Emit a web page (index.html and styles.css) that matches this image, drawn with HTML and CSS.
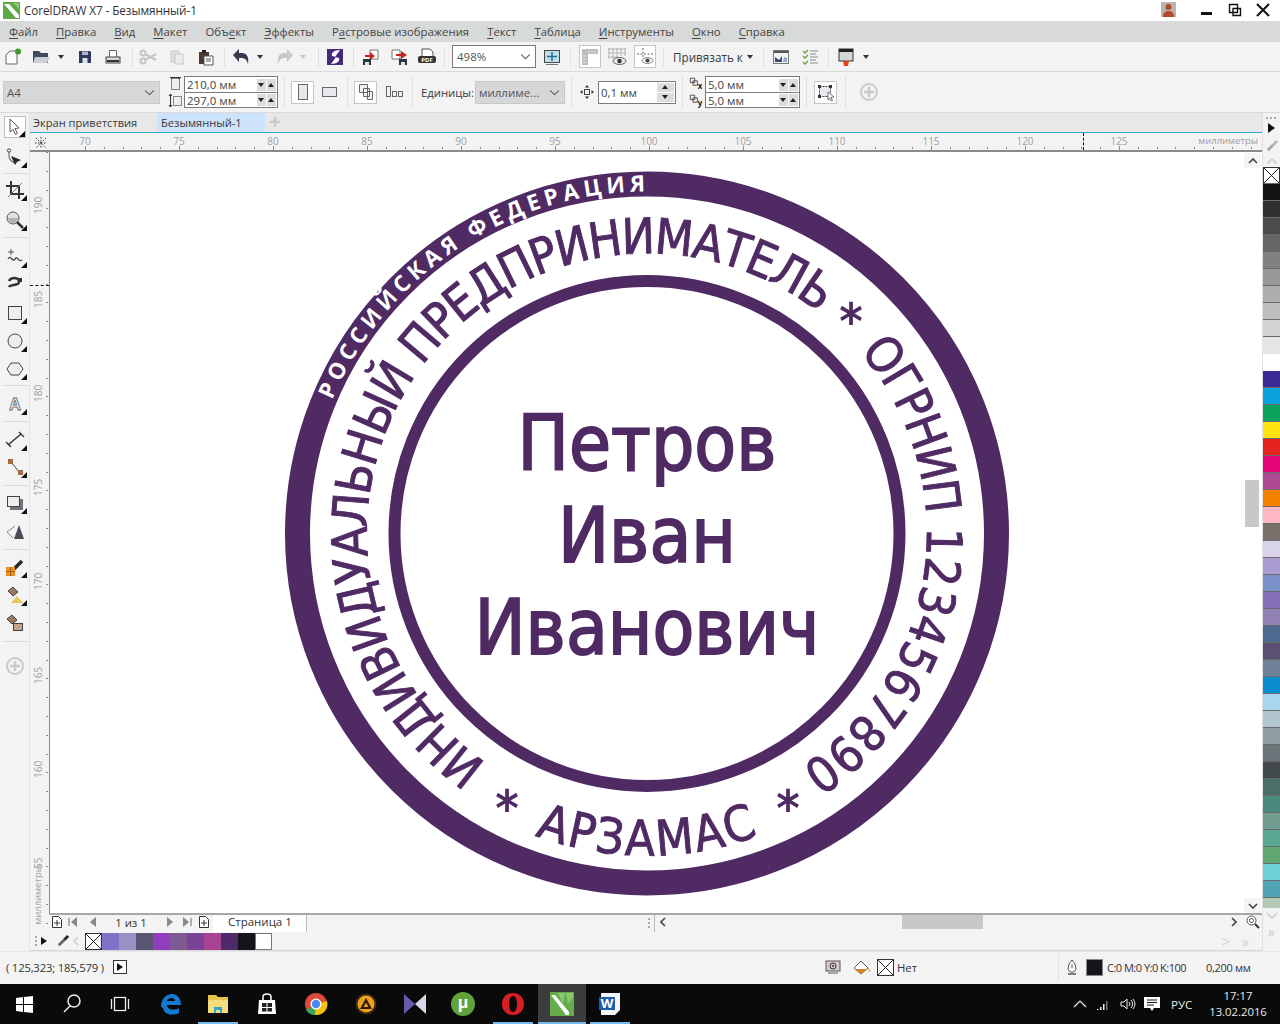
FILE: index.html
```html
<!DOCTYPE html>
<html lang="ru">
<head>
<meta charset="utf-8">
<title>CorelDRAW X7 - Безымянный-1</title>
<link rel="stylesheet" href="styles.css">
</head>
<body>
<div class="app">
  <header class="title">
    <svg class="logo" viewBox="0 0 17 17"><rect width="17" height="17" fill="#5fa845"/><path d="M1 2h5l10 11v3h-3z" fill="#fff"/><path d="M10 1h6v6z" fill="#8cc872"/></svg>
    <span class="title-text">CorelDRAW X7 - Безымянный-1</span>
    <svg class="user" viewBox="0 0 15 15"><rect width="15" height="15" fill="#b9b4b0"/><circle cx="7.5" cy="5" r="3" fill="#b5482a"/><path d="M2 15c0-5 3-6 5.500-6s5.500 1 5.500 6z" fill="#b5482a"/></svg>
    <svg class="winbtn" viewBox="0 0 28 18"><rect x="8" y="11" width="11" height="3" fill="#111"/></svg>
    <svg class="winbtn" viewBox="0 0 28 18"><path d="M8.500 3.500h8v8h-8zM12 7.500h7.500v7H12z" fill="#fff" stroke="#111" stroke-width="1.400"/></svg>
    <svg class="winbtn" viewBox="0 0 28 18"><path d="M8 3l12 12M20 3L8 15" stroke="#111" stroke-width="2"/></svg>
  </header>

  <nav class="menu">
    <span><u>Ф</u>айл</span><span><u>П</u>равка</span><span><u>В</u>ид</span><span><u>М</u>акет</span><span>Объ<u>е</u>кт</span><span><u>Э</u>ффекты</span><span>Р<u>а</u>стровые изображения</span><span><u>Т</u>екст</span><span><u>Т</u>аблица</span><span><u>И</u>нструменты</span><span><u>О</u>кно</span><span><u>С</u>правка</span>
  </nav>

  <div class="bar1">
    <svg class="ic ml3" viewBox="0 0 20 20"><path d="M3 17V8l4-4h7v13z" fill="#fafafa" stroke="#666"/><circle cx="15" cy="4.500" r="3" fill="#3f9a2c"/></svg>
    <svg class="ic ml8" viewBox="0 0 20 20"><path d="M2 4h6l2 2h7v10H2z" fill="#3d4a5e"/><path d="M2 16l2-6h15l-3 6z" fill="#c9ced6"/></svg>
    <i class="dd ml6"></i>
    <svg class="ic ml10" viewBox="0 0 20 20"><path d="M4 4h11l1 1v11H4z" fill="#2f3a5c"/><rect x="7" y="4.500" width="6" height="3.500" fill="#aeb6c8"/><rect x="7.500" y="11" width="5" height="5" fill="#dfe3ea"/></svg>
    <svg class="ic ml8" viewBox="0 0 20 20"><path d="M6.500 3.500h7v7h-7z" fill="#fff" stroke="#666"/><rect x="3" y="10" width="14" height="6" fill="#d6d8dc" stroke="#444"/><rect x="4" y="13" width="12" height="2" fill="#333"/></svg>
    <i class="sep ml9"></i>
    <svg class="ic ml5" viewBox="0 0 20 20"><g fill="none" stroke="#c6c6c8" stroke-width="2"><circle cx="5" cy="6" r="2.500"/><circle cx="5" cy="14" r="2.500"/><path d="M7 7l11 6M7 13l11-6"/></g></svg>
    <svg class="ic ml9" viewBox="0 0 20 20"><path d="M4 4h8v11H4z" fill="#e0e0e2" stroke="#ccc"/><path d="M8 7h8v10H8z" fill="#ececee" stroke="#c6c6c8"/></svg>
    <svg class="ic ml8" viewBox="0 0 20 20"><path d="M4 5h10v12H4z" fill="#4b3a32"/><rect x="7" y="3" width="4" height="3" fill="#222"/><path d="M9 9h9v9H9z" fill="#fff" stroke="#555"/><path d="M11 12h5M11 14h5" stroke="#555"/></svg>
    <i class="sep ml9"></i>
    <svg class="ic ml6" viewBox="0 0 20 20"><path d="M2 8l6-6v4h3c5 0 7 4 6 11-1-4-3-6-6-6H8v4z" fill="#333b4a"/></svg>
    <i class="dd ml5"></i>
    <svg class="ic ml11" viewBox="0 0 20 20"><path d="M18 8l-6-6v4H9C4 6 2 10 3 17c1-4 3-6 6-6h3v4z" fill="#c8c9cc"/></svg>
    <i class="dd dd-off ml4"></i>
    <i class="sep ml11"></i>
    <svg class="ic ml6" viewBox="0 0 20 20"><rect x="2" y="2" width="16" height="16" fill="#47287c"/><path d="M15 3C9 3 6 6 7 9l4 1-5 7c6 0 9-3 8-6l-4-1z" fill="#fff"/></svg>
    <i class="sep ml8"></i>
    <svg class="ic ml7" viewBox="0 0 20 20"><path d="M9 3h8v9H9z" fill="#fff" stroke="#777"/><path d="M4 8h5V5l5 4-5 4v-3H4z" fill="#c52222"/><rect x="2" y="12" width="8" height="6" fill="#2d3340"/><rect x="4" y="15" width="4" height="3" fill="#dfe3ea"/></svg>
    <svg class="ic ml8" viewBox="0 0 20 20"><path d="M3 3h8v9H3z" fill="#fff" stroke="#777"/><path d="M7 7h5V4l6 4-6 4V9H7z" fill="#c52222"/><rect x="10" y="12" width="8" height="6" fill="#2d3340"/><rect x="12" y="15" width="4" height="3" fill="#dfe3ea"/></svg>
    <svg class="ic ml8" viewBox="0 0 20 20"><path d="M5 2h8l3 3v5H5z" fill="#fff" stroke="#555"/><rect x="1" y="9" width="18" height="7" rx="2" fill="#333"/><text x="10" y="15" class="pdf">PDF</text></svg>
    <i class="sep ml7"></i>
    <div class="combo ml7"><span>498%</span><svg class="chev" viewBox="0 0 10 6"><path d="M1 1l4 4 4-4" fill="none" stroke="#666"/></svg></div>
    <svg class="ic ml6" viewBox="0 0 20 20"><rect x="2.500" y="3.500" width="15" height="12" fill="#bfdfe8" stroke="#444"/><path d="M10 5v9M5 9.500h10" stroke="#1f6f90" stroke-width="1.500"/><path d="M4 17.500h12" stroke="#777"/></svg>
    <i class="sep ml8"></i>
    <div class="box ml8"><svg class="ic" viewBox="0 0 20 20"><path d="M2 2h16v5H8v11H2z" fill="#bbbcbe"/><path d="M9 4v2M12 4v2M15 4v2M3 9h3M3 12h3M3 15h3" stroke="#eee"/></svg></div>
    <svg class="ic ml6" viewBox="0 0 20 20"><path d="M2 1v11M6 1v11M10 1v9M14 1v8M18 1v8M1 2h18M1 6h18M1 10h10" stroke="#b4b4b6"/><ellipse cx="12.500" cy="14" rx="6.500" ry="3.500" fill="#e8e8e8" stroke="#666"/><circle cx="12.500" cy="14" r="2.200" fill="#333"/></svg>
    <div class="box ml7"><svg class="ic" viewBox="0 0 20 20"><path d="M2 7h16M8 1v10" stroke="#666" stroke-dasharray="2 1.500"/><ellipse cx="12.500" cy="13.500" rx="5.500" ry="3" fill="#eee" stroke="#888"/><circle cx="12.500" cy="13.500" r="2" fill="#444"/></svg></div>
    <i class="sep ml7"></i>
    <span class="snap ml9">Привязать к</span>
    <i class="dd ml1"></i>
    <i class="sep ml9"></i>
    <svg class="ic ml7" viewBox="0 0 20 20"><rect x="2.500" y="3.500" width="15" height="13" fill="#f4f4f4" stroke="#777"/><rect x="3" y="4" width="14" height="2" fill="#555"/><path d="M4 15v-5l4 3 3-4v6z" fill="#394a78"/><path d="M12 15l1-5 3 1v4z" fill="#9aa7c4"/></svg>
    <svg class="ic ml9" viewBox="0 0 20 20"><path d="M3 4l2 2 3-3M3 9l2 2 3-3M3 15l2 2 3-3" fill="none" stroke="#6ba23f" stroke-width="1.300"/><path d="M10 4h8M10 7h6M10 10h8M10 13h6M10 16h8" stroke="#8b8b8d"/></svg>
    <i class="sep ml8"></i>
    <svg class="ic ml7" viewBox="0 0 20 20"><rect x="3" y="2" width="14" height="12" fill="#d4d6da" stroke="#333"/><rect x="3" y="2" width="14" height="3" fill="#222"/><path d="M7 14h6l-1 5H8z" fill="#e8421a"/></svg>
    <i class="dd ml6"></i>
  </div>

  <div class="bar2">
    <div class="select sel-a4"><span>A4</span><svg class="chev" viewBox="0 0 10 6"><path d="M1 1l4 4 4-4" fill="none" stroke="#666"/></svg></div>
    <div class="dual ml8">
      <svg class="mini" viewBox="0 0 15 15"><rect x="3.500" y="2.500" width="8" height="11" fill="#eee" stroke="#888"/><path d="M2 1.500h11" stroke="#333"/><path d="M4 1v2M11 1v2" stroke="#333"/></svg>
      <svg class="mini" viewBox="0 0 15 15"><rect x="5.500" y="3.500" width="8" height="9" fill="#eee" stroke="#888"/><path d="M2.500 1v13M1 3l1.500-2L4 3M1 12l1.500 2L4 12" fill="none" stroke="#333"/></svg>
    </div>
    <div class="pair ml1 w94">
      <div class="pair-row"><span>210,0 мм</span><b class="sp dn"></b><b class="sp up"></b></div>
      <div class="pair-row"><span>297,0 мм</span><b class="sp dn"></b><b class="sp up"></b></div>
    </div>
    <i class="sep sep-tall ml6"></i>
    <div class="box box-lg ml6"><svg class="ic" viewBox="0 0 20 20"><rect x="5.500" y="2.500" width="9" height="15" fill="#e6e8ee" stroke="#666"/></svg></div>
    <svg class="ic ml5" viewBox="0 0 20 20"><rect x="3.500" y="5.500" width="14" height="9" fill="#e6e8ee" stroke="#666"/></svg>
    <i class="sep sep-tall ml8"></i>
    <div class="box box-lg ml6"><svg class="ic" viewBox="0 0 20 20"><path d="M3.500 2.500h8v8h-8zM7.500 6.500h6v8h-6zM11.500 9.500h5v8h-5z" fill="#f2f2f2" stroke="#666"/></svg></div>
    <svg class="ic ml7" viewBox="0 0 20 20"><rect x="2.500" y="4.500" width="4" height="10" fill="#f2f2f2" stroke="#666"/><rect x="8.500" y="9.500" width="4" height="5" fill="#f2f2f2" stroke="#666"/><rect x="14.500" y="9.500" width="4" height="5" fill="#f2f2f2" stroke="#666"/></svg>
    <i class="sep sep-tall ml8"></i>
    <span class="units ml8">Единицы:</span>
    <div class="select sel-unit ml2"><span>миллиме...</span><svg class="chev" viewBox="0 0 10 6"><path d="M1 1l4 4 4-4" fill="none" stroke="#666"/></svg></div>
    <i class="sep sep-tall ml6"></i>
    <svg class="ic ml5" viewBox="0 0 20 20"><path d="M10 3l2 2.500H8zM10 17l2-2.500H8zM3 10l2.500-2v4zM17 10l-2.500-2v4z" fill="#333"/><rect x="7.500" y="7.500" width="5" height="5" fill="#eee" stroke="#444"/></svg>
    <div class="nudge ml1"><span>0,1 мм</span><div class="nudge-sp"><b class="sp up"></b><b class="sp dn"></b></div></div>
    <i class="sep sep-tall ml6"></i>
    <div class="dual ml6">
      <svg class="mini" viewBox="0 0 17 15"><path d="M1.500 1.500h5v5h-5zM4.500 4.500h5v5h-5z" fill="#f2f2f2" stroke="#444"/><text x="10" y="14" class="xy">x</text></svg>
      <svg class="mini" viewBox="0 0 17 15"><path d="M1.500 1.500h5v5h-5zM4.500 4.500h5v5h-5z" fill="#f2f2f2" stroke="#444"/><text x="10" y="14" class="xy">y</text></svg>
    </div>
    <div class="pair ml1 w95">
      <div class="pair-row"><span>5,0 мм</span><b class="sp dn"></b><b class="sp up"></b></div>
      <div class="pair-row"><span>5,0 мм</span><b class="sp dn"></b><b class="sp up"></b></div>
    </div>
    <i class="sep sep-tall ml6"></i>
    <div class="box box-lg ml7"><svg class="ic" viewBox="0 0 20 20"><path d="M3.500 4.500h11v10h-11z" fill="#e6e8ee" stroke="#444" stroke-dasharray="2 1"/><path d="M2 3h3v3H2zM13 3h3v3h-3zM2 13h3v3H2zM13 13h3v3h-3z" fill="#333"/><path d="M12 10l6 5-3 .500 1.500 3-1.500.500-1.500-3-1.500 2z" fill="#fff" stroke="#444" stroke-width=".7"/></svg></div>
    <i class="sep sep-tall ml8"></i>
    <svg class="ic ml13" viewBox="0 0 20 20"><circle cx="10" cy="10" r="8" fill="none" stroke="#c9c9cb" stroke-width="2"/><path d="M10 5v10M5 10h10" stroke="#c9c9cb" stroke-width="2.500"/></svg>
  </div>

  <div class="main">
    <aside class="toolbox">
      <div class="tool-box fly"><svg class="ic" viewBox="0 0 20 20"><path d="M5 2l9 9-4 .500 2.500 5-2 1-2.500-5L5 15z" fill="#fff" stroke="#555"/></svg></div>
      <div class="tool fly mt9"><svg class="ic" viewBox="0 0 20 20"><path d="M4 3v6c0 3 2 5 5 7" fill="none" stroke="#777" stroke-width="1.300"/><path d="M6 9l10 4-4 2-2 3z" fill="#1d2b33"/><circle cx="4" cy="3.500" r="1.600" fill="#fff" stroke="#444"/></svg></div>
      <i class="hsep mt6"></i>
      <div class="tool fly mt6"><svg class="ic" viewBox="0 0 20 20"><path d="M6 1v13h13M1 6h13v13" fill="none" stroke="#333" stroke-width="2"/><path d="M3 17L17 3" stroke="#777"/></svg></div>
      <div class="tool fly mt10"><svg class="ic" viewBox="0 0 20 20"><circle cx="8" cy="8" r="6" fill="#e0e0e2" stroke="#555"/><path d="M3 8a5 5 0 0 0 10 0z" fill="#b0b2b6"/><path d="M12 12l6 6" stroke="#333" stroke-width="2.500"/></svg></div>
      <i class="hsep mt7"></i>
      <div class="tool fly mt9"><svg class="ic" viewBox="0 0 20 20"><path d="M6 2v6M3 5h6" stroke="#555"/><path d="M3 12c3-5 4 4 7 0s3 4 7 1" fill="none" stroke="#444" stroke-width="1.300"/></svg></div>
      <div class="tool mt6"><svg class="ic" viewBox="0 0 20 20"><path d="M4 8c2-4 9-4 10 0 1 5-9 3-10 6" fill="none" stroke="#333" stroke-width="2.500"/><rect x="13" y="5" width="4" height="4" fill="#333"/></svg></div>
      <div class="tool fly mt10"><svg class="ic" viewBox="0 0 20 20"><rect x="3.500" y="3.500" width="13" height="13" fill="#eceef2" stroke="#444"/></svg></div>
      <div class="tool fly mt8"><svg class="ic" viewBox="0 0 20 20"><circle cx="10" cy="10" r="7" fill="#eceef2" stroke="#444"/></svg></div>
      <div class="tool fly mt8"><svg class="ic" viewBox="0 0 20 20"><path d="M6 4h8l4 6-4 6H6l-4-6z" fill="#eceef2" stroke="#444"/></svg></div>
      <i class="hsep mt6"></i>
      <div class="tool fly mt8"><svg class="ic" viewBox="0 0 20 20"><text x="10" y="16" class="tool-a">A</text></svg></div>
      <i class="hsep mt7"></i>
      <div class="tool fly mt8"><svg class="ic" viewBox="0 0 20 20"><path d="M3 15L16 4" stroke="#333" stroke-width="1.500"/><path d="M1 12l5 5M14 2l5 5" stroke="#333" stroke-width="1.300"/></svg></div>
      <div class="tool fly mt7"><svg class="ic" viewBox="0 0 20 20"><path d="M6 5l9 11" stroke="#444"/><rect x="3" y="2" width="5" height="5" fill="#a36a44"/><rect x="13" y="13" width="5" height="5" fill="#a36a44"/></svg></div>
      <i class="hsep mt8"></i>
      <div class="tool fly mt7"><svg class="ic" viewBox="0 0 20 20"><rect x="5" y="6" width="13" height="11" fill="#71737a"/><rect x="2.500" y="3.500" width="12" height="10" fill="#eceef2" stroke="#444"/></svg></div>
      <div class="tool mt8"><svg class="ic" viewBox="0 0 20 20"><path d="M9 18l5-14 5 14z" fill="#4a4c54"/><path d="M2 11l8-6M2 11l6 6" stroke="#888" fill="none"/></svg></div>
      <i class="hsep mt8"></i>
      <div class="tool fly mt7"><svg class="ic" viewBox="0 0 20 20"><path d="M9 12L17 4" stroke="#2a2a2c" stroke-width="3.500"/><rect x="1" y="10" width="9" height="9" fill="#ea9323"/><path d="M5.500 10v9M1 14.500h9" stroke="#a85e10"/></svg></div>
      <div class="tool fly mt8"><svg class="ic" viewBox="0 0 20 20"><path d="M3 6l5-4 5 5-5 4z" fill="#9a7a5c" stroke="#444"/><path d="M6 18l6-7 6 7z" fill="#e8c75a"/></svg></div>
      <div class="tool mt8"><svg class="ic" viewBox="0 0 20 20"><path d="M2 6l5-4 5 5-5 4z" fill="#9a7a5c" stroke="#444"/><rect x="8.500" y="10.500" width="9" height="7" fill="#c0a58a" stroke="#444"/></svg></div>
      <i class="hsep mt8"></i>
      <div class="tool mt14"><svg class="ic" viewBox="0 0 20 20"><circle cx="10" cy="10" r="8" fill="none" stroke="#c9c9cb" stroke-width="2"/><path d="M10 5v10M5 10h10" stroke="#c9c9cb" stroke-width="2.500"/></svg></div>
    </aside>

    <section class="work">
      <div class="tabs">
        <span class="tab tab-a">Экран приветствия</span>
        <span class="tab tab-b">Безымянный-1</span>
        <span class="tab-plus">+</span>
      </div>
      <div class="hruler">
        <svg class="corner" viewBox="0 0 12 12"><path d="M6 0v12M0 6h12M1 1l10 10M11 1L1 11" stroke="#333" stroke-dasharray="1.500 1.500" fill="none"/></svg>
        <span class="rx">70</span><span class="rx">75</span><span class="rx">80</span><span class="rx">85</span><span class="rx">90</span><span class="rx">95</span><span class="rx">100</span><span class="rx">105</span><span class="rx">110</span><span class="rx">115</span><span class="rx">120</span><span class="rx">125</span>
        <span class="unit-h">миллиметры</span>
        <i class="mark-h"></i>
      </div>
      <div class="body">
        <div class="vruler">
          <span class="ry">190</span><span class="ry">185</span><span class="ry">180</span><span class="ry">175</span><span class="ry">170</span><span class="ry">165</span><span class="ry">160</span><span class="ry ry-last">55</span>
          <span class="unit-v">миллиметры</span>
          <i class="mark-v"></i>
        </div>
        <div class="view">
          <div class="canvas">
            <svg class="stamp" viewBox="50 152 1211 761">
              <defs>
                <path id="arcTop" d="M332.200 399.900A342 342 0 0 1 764 212.100"/>
                <path id="arcMain" d="M486.400 762.900A280 280 0 1 1 695.600 809.200"/>
                <path id="arcBottom" d="M510.900 825.300A322 322 0 0 0 783.100 825.300"/>
              </defs>
              <circle cx="647" cy="533.500" r="349.500" class="ring ring-a"/>
              <circle cx="647" cy="533.500" r="252.500" class="ring ring-b"/>
              <text class="st-top"><textPath href="#arcTop" textLength="398" lengthAdjust="spacing">РОССИЙСКАЯ ФЕДЕРАЦИЯ</textPath></text>
              <text class="st-arc"><textPath href="#arcMain" textLength="894" lengthAdjust="spacing">ИНДИВИДУАЛЬНЫЙ ПРЕДПРИНИМАТЕЛЬ</textPath></text>
              <text class="st-arc"><textPath href="#arcMain" startOffset="950" textLength="179" lengthAdjust="spacing">ОГРНИП</textPath></text>
              <text class="st-arc"><textPath href="#arcMain" startOffset="1142" textLength="283" lengthAdjust="spacing">1234567890</textPath></text>
              <text class="st-arc"><textPath href="#arcBottom" startOffset="26" textLength="228" lengthAdjust="spacing">АРЗАМАС</textPath></text>
              <text class="st-star" x="851" y="339">*</text>
              <text class="st-star" x="507" y="826">*</text>
              <text class="st-star" x="788" y="826">*</text>
              <text class="st-name" x="647" y="470">Петров</text>
              <text class="st-name" x="647" y="562">Иван</text>
              <text class="st-name" x="647" y="654">Иванович</text>
            </svg>
            <div class="vscroll">
              <div class="arrow-box"><svg class="arrow" viewBox="0 0 10 6"><path d="M1 5l4-4 4 4" fill="none" stroke="#444" stroke-width="1.600"/></svg></div>
              <i class="vthumb"></i>
              <div class="arrow-box"><svg class="arrow" viewBox="0 0 10 6"><path d="M1 1l4 4 4-4" fill="none" stroke="#444" stroke-width="1.600"/></svg></div>
            </div>
          </div>
          <div class="pagerow">
            <svg class="pg" viewBox="0 0 12 14"><path d="M1.500 1.500h6l3 3v8h-9z" fill="#fff" stroke="#333"/><path d="M6 5v6M3 8h6" stroke="#333"/></svg>
            <svg class="pg ml4" viewBox="0 0 12 14"><path d="M2 3v8" stroke="#999" stroke-width="1.500"/><path d="M10 2L4 7l6 5z" fill="#888"/></svg>
            <svg class="pg ml7" viewBox="0 0 12 14"><path d="M10 2L4 7l6 5z" fill="#888"/></svg>
            <span class="pg-num">1 из 1</span>
            <svg class="pg" viewBox="0 0 12 14"><path d="M2 2l6 5-6 5z" fill="#888"/></svg>
            <svg class="pg ml4" viewBox="0 0 12 14"><path d="M2 2l6 5-6 5z" fill="#888"/><path d="M10 3v8" stroke="#999" stroke-width="1.500"/></svg>
            <svg class="pg ml5" viewBox="0 0 12 14"><path d="M1.500 1.500h6l3 3v8h-9z" fill="#fff" stroke="#333"/><path d="M6 5v6M3 8h6" stroke="#333"/></svg>
            <div class="pg-tab">Страница 1</div>
            <div class="pg-fill"><i class="dots"></i></div>
            <div class="hscroll">
              <svg class="arrow-s" viewBox="0 0 6 10"><path d="M5 1L1 5l4 4" fill="none" stroke="#444" stroke-width="1.600"/></svg>
              <i class="hthumb"></i>
              <svg class="arrow-s" viewBox="0 0 6 10"><path d="M1 1l4 4-4 4" fill="none" stroke="#444" stroke-width="1.600"/></svg>
            </div>
            <svg class="zoomer" viewBox="0 0 14 14"><circle cx="5.500" cy="5.500" r="4.500" fill="#fff" stroke="#555"/><circle cx="5.500" cy="5.500" r="2" fill="none" stroke="#555"/><path d="M9 9l4 4" stroke="#333" stroke-width="2"/></svg>
          </div>
        </div>
      </div>
      <div class="docpal">
        <i class="dots dots-s"></i>
        <i class="play"></i>
        <svg class="pick" viewBox="0 0 14 14"><path d="M3 11l6-6" stroke="#666" stroke-width="3"/><path d="M9 5l4-4" stroke="#222" stroke-width="3"/></svg>
        <svg class="lt" viewBox="0 0 6 10"><path d="M5 1L1 5l4 4" fill="none" stroke="#ccc" stroke-width="1.500"/></svg>
        <div class="swatches-h">
          <i class="sw sw-x"></i><i class="sw c-a1"></i><i class="sw c-a2"></i><i class="sw c-a3"></i><i class="sw c-a4"></i><i class="sw c-a5"></i><i class="sw c-a6"></i><i class="sw c-a7"></i><i class="sw c-a8"></i><i class="sw c-k"></i><i class="sw c-w"></i>
        </div>
        <span class="docpal-end"><span>&gt;</span><span>»</span></span>
      </div>
    </section>

    <aside class="palette">
      <i class="dots-top"></i>
      <i class="play play-r"></i>
      <svg class="pick pick-r" viewBox="0 0 14 14"><path d="M3 11l6-6" stroke="#aaa" stroke-width="3"/><path d="M9 5l4-4" stroke="#bbb" stroke-width="3"/></svg>
      <svg class="pal-arrow" viewBox="0 0 12 7"><path d="M1 6l5-5 5 5" fill="none" stroke="#ccc" stroke-width="1.500"/></svg>
      <div class="swatches-v">
        <i class="sv sw-x"></i>
        <i class="sv g1"></i><i class="sv g2"></i><i class="sv g3"></i><i class="sv g4"></i><i class="sv g5"></i><i class="sv g6"></i><i class="sv g7"></i><i class="sv g8"></i><i class="sv g9"></i><i class="sv g10"></i>
        <i class="sv c-w2"></i>
        <i class="sv p1"></i><i class="sv p2"></i><i class="sv p3"></i><i class="sv p4"></i><i class="sv p5"></i><i class="sv p6"></i><i class="sv p7"></i><i class="sv p8"></i><i class="sv p9"></i><i class="sv p10"></i><i class="sv p11"></i><i class="sv p12"></i><i class="sv p13"></i><i class="sv p14"></i><i class="sv p15"></i><i class="sv p16"></i><i class="sv p17"></i><i class="sv p18"></i><i class="sv p19"></i><i class="sv p20"></i><i class="sv p21"></i><i class="sv p22"></i><i class="sv p23"></i><i class="sv p24"></i><i class="sv p25"></i><i class="sv p26"></i><i class="sv p27"></i><i class="sv p28"></i><i class="sv p29"></i><i class="sv p30"></i><i class="sv p31"></i><i class="sv p32"></i>
      </div>
      <svg class="pal-arrow pal-down" viewBox="0 0 12 7"><path d="M1 1l5 5 5-5" fill="none" stroke="#ccc" stroke-width="1.500"/></svg>
      <span class="pal-more">»</span>
    </aside>
  </div>

  <footer class="status">
    <span class="coords">( 125,323; 185,579 )</span>
    <div class="playbox"><i class="play"></i></div>
    <svg class="st-ic st-mon" viewBox="0 0 16 16"><rect x="1" y="2" width="14" height="10" fill="#d8c8c8" stroke="#556"/><circle cx="8" cy="7" r="3" fill="none" stroke="#333"/><circle cx="8" cy="7" r="1" fill="#333"/><path d="M3 14h10" stroke="#556"/></svg>
    <svg class="st-ic st-fill" viewBox="0 0 18 16"><path d="M1 9l7-7 7 7-7 6z" fill="#fff" stroke="#555"/><path d="M2 10h12l-6 5z" fill="#d9812a"/><path d="M15 9c1 2 2 3 1 4" stroke="#d9812a" fill="none"/></svg>
    <i class="sw sw-x st-x"></i>
    <span class="st-none">Нет</span>
    <i class="sep st-sep"></i>
    <svg class="st-ic st-pen" viewBox="0 0 12 16"><path d="M6 1l3 4 1 5-2 3H4l-2-3 1-5z" fill="#fff" stroke="#555"/><path d="M6 5v4" stroke="#555"/><path d="M2 15h8" stroke="#555" stroke-width="1.500"/></svg>
    <i class="st-k"></i>
    <span class="st-cmyk">C:0 M:0 Y:0 K:100</span>
    <span class="st-wd">0,200 мм</span>
  </footer>

  <div class="taskbar">
    <svg class="tk ml12" viewBox="0 0 24 24"><path d="M4 6l7-1v7H4zM12 5l9-1v8h-9zM4 13h7v7l-7-1zM12 13h9v8l-9-1z" fill="#fff"/></svg>
    <svg class="tk ml24" viewBox="0 0 24 24"><circle cx="14" cy="9" r="6" fill="none" stroke="#eee" stroke-width="1.500"/><path d="M10 14l-6 6" stroke="#eee" stroke-width="1.500"/></svg>
    <svg class="tk ml24" viewBox="0 0 24 24"><rect x="6.500" y="5.500" width="11" height="13" fill="none" stroke="#eee" stroke-width="1.300"/><path d="M3.500 7v10M20.500 7v10" stroke="#eee" stroke-width="1.300"/></svg>
    <svg class="tk ml26" viewBox="0 0 24 24"><path d="M3 15C3 7 8 2 14 2c5 0 9 4 9 11H9c0 5 8 6 12 3v5c-6 3-15 2-16-5 0 0-1-1-2-1z" fill="#1378d0"/><path d="M9 9h8c0-4-7-4-8 0z" fill="#0a0a0a"/></svg>
    <div class="tk-wrap tk-on ml24"><svg class="tk" viewBox="0 0 24 24"><path d="M2 3h8l2 2h10v4H2z" fill="#e8c34e"/><path d="M2 8h20v13H2z" fill="#f6dd7c"/><path d="M8 21v-6h8v6h-2v-3h-4v3z" fill="#2fa8d8"/></svg></div>
    <svg class="tk ml25" viewBox="0 0 24 24"><path d="M4 8h16l1 14H3z" fill="#fff"/><path d="M8 8V5c0-4 8-4 8 0v3" fill="none" stroke="#fff" stroke-width="1.500"/><path d="M7 11h4.500v4H7zM12.500 11H17v4h-4.500zM7 16h4.500v3.500H7zM12.500 16H17v3.500h-4.500z" fill="#222"/></svg>
    <svg class="tk ml25" viewBox="0 0 24 24"><circle cx="12" cy="12" r="11" fill="#dd4a3c"/><path d="M12 12L2 18a11 11 0 0 0 9 5z" fill="#3aa757"/><path d="M12 12l-1 11A11 11 0 0 0 23 9z" fill="#f4c20d"/><circle cx="12" cy="12" r="5.500" fill="#fff"/><circle cx="12" cy="12" r="4.200" fill="#4a8af4"/></svg>
    <svg class="tk ml26" viewBox="0 0 24 24"><circle cx="12" cy="12" r="10.500" fill="#3a2a12"/><circle cx="12" cy="12" r="8.500" fill="#f0a020"/><path d="M12 6l6 11H6z" fill="#2a1c08"/><path d="M12 10.500l2.500 4.500h-5z" fill="#f0a020"/></svg>
    <svg class="tk ml25" viewBox="0 0 24 24"><path d="M1 2l11 10L1 22z" fill="#6a5ab0"/><path d="M23 2L12 12l11 10z" fill="#d8d8e8"/></svg>
    <svg class="tk ml24" viewBox="0 0 24 24"><circle cx="12" cy="12" r="12" fill="#5fa33a"/><text x="12" y="16" class="tk-mu">µ</text></svg>
    <div class="tk-wrap tk-on ml26"><svg class="tk" viewBox="0 0 24 24"><path fill-rule="evenodd" d="M12 1c7 0 11 5 11 11s-4 11-11 11S1 18 1 12 5 1 12 1zm0 3c-2.500 0-4 3.500-4 8s1.500 8 4 8 4-3.500 4-8-1.500-8-4-8z" fill="#d81e22"/></svg></div>
    <div class="tk-wrap tk-on tk-active ml25"><svg class="tk" viewBox="0 0 24 24"><rect width="24" height="24" fill="#65ad4a"/><path d="M1 3h4l14 17v3h-3z" fill="#fff"/><path d="M8 1l5 11 2-11zM16 1l2 11 5-7V1z" fill="#8cc872"/></svg></div>
    <div class="tk-wrap tk-on ml24"><svg class="tk" viewBox="0 0 24 24"><path d="M3 1h19v17l-5 5H3z" fill="#f2f4f8"/><path d="M1 5h16v13H1z" fill="#1d5bb0"/><text x="9" y="16" class="tk-w">W</text></svg></div>
    <div class="tray">
      <svg class="tr tr-a" viewBox="0 0 14 14"><path d="M1 10l6-6 6 6" fill="none" stroke="#eee" stroke-width="1.200"/></svg>
      <svg class="tr tr-b" viewBox="0 0 14 14"><path d="M1 12h1.500v1H1zM4 10h1.500v3H4zM7 7h1.500v6H7z" fill="#eee"/><path d="M10 4h1.500v9H10z" fill="#777"/></svg>
      <svg class="tr tr-c" viewBox="0 0 16 14"><path d="M1 5h3l3-3v10L4 9H1z" fill="none" stroke="#eee"/><path d="M9 5a3 3 0 0 1 0 4M11 3a6 6 0 0 1 0 8M13 2a8 8 0 0 1 0 10" fill="none" stroke="#eee"/></svg>
      <svg class="tr tr-d" viewBox="0 0 16 16"><path d="M0 1h16v11H10l-2 3-2-3H0z" fill="#fff"/><path d="M3 4h10M3 6.500h10M3 9h7" stroke="#111"/></svg>
      <span class="lang">РУС</span>
      <div class="clock"><span>17:17</span><span>13.02.2016</span></div>
    </div>
  </div>
</div>
</body>
</html>
```
FILE: styles.css
```css
*{box-sizing:border-box}
html,body{margin:0;padding:0;background:#fff}
body{width:1280px;height:1024px;overflow:hidden;font:11.500px "Open Sans","Noto Sans",sans-serif;color:#3a3a3c}
i,b{display:block;font-style:normal}
.app{display:flex;flex-direction:column;width:1280px;height:1024px}

.ml1{margin-left:1px}.ml2{margin-left:2px}.ml3{margin-left:3px}.ml4{margin-left:4px}.ml5{margin-left:5px}.ml6{margin-left:6px}.ml7{margin-left:7px}.ml8{margin-left:8px}.ml9{margin-left:9px}.ml10{margin-left:10px}.ml11{margin-left:11px}.ml12{margin-left:12px}.ml13{margin-left:13px}.ml24{margin-left:24px}.ml25{margin-left:25px}.ml26{margin-left:26px}
.mt6{margin-top:6px}.mt7{margin-top:7px}.mt8{margin-top:8px}.mt9{margin-top:9px}.mt10{margin-top:10px}.mt14{margin-top:14px}

.title{height:21px;background:#fff;display:flex;align-items:center;padding:0 3px 2px 3px;flex:none}
.logo{width:17px;height:17px;margin-top:2px}
.title-text{margin-left:4px;font-size:11.800px;color:#333;letter-spacing:-.1px}
.user{width:15px;height:15px;margin-left:auto;margin-right:17px}
.winbtn{width:28px;height:18px}

.menu{height:21px;background:#d8dad9;display:flex;align-items:center;gap:18px;padding-left:9px;flex:none;font-size:11.350px;color:#444}
.menu u{text-underline-offset:2px}

.bar1,.bar2{background:#f3f3f4;display:flex;align-items:center;flex:none;border-bottom:1px solid #d9d9da}
.bar1{height:30px}
.bar2{height:41px;padding-left:3px}
.ic{width:20px;height:20px;flex:none}
.sep{width:1px;height:20px;background:#e0e0e1;flex:none}
.sep-tall{height:32px}
.dd{flex:none;width:8px;height:4px;position:relative}
.dd::after{content:"";position:absolute;left:1px;top:0;border:3px solid transparent;border-top:4px solid #333;border-bottom:0}
.dd-off::after{border-top-color:#c6c6c8}
.combo{width:84px;height:23px;border:1px solid #7a7a7c;background:#fff;display:flex;align-items:center;justify-content:space-between;padding:0 4px;flex:none;color:#555}
.chev{width:11px;height:7px;flex:none}
.box{width:22px;height:23px;border:1px solid #c6c6c8;background:#fff;display:flex;align-items:center;justify-content:center;flex:none}
.box-lg{width:23px}
.snap{width:72px;flex:none;color:#3a3a3c;white-space:nowrap;font-size:11.700px}

.select{height:23px;background:#d6d7d8;border:1px solid #c8c9ca;display:flex;align-items:center;justify-content:space-between;padding:0 4px 0 3px;flex:none;color:#555}
.sel-a4{width:157px}
.sel-unit{width:90px}
.dual{display:flex;flex-direction:column;gap:2px;flex:none}
.mini{width:15px;height:15px;display:block}
.pair{border:1px solid #7a7a7c;background:#fff;flex:none}
.w94{width:94px}.w95{width:95px}
.pair-row{height:15px;display:flex;align-items:center;gap:1px;padding:0 1px 0 2px;font-size:11.500px;color:#444}
.pair-row+.pair-row{border-top:1px solid #7a7a7c}
.pair-row span{flex:1}
.sp{width:9px;height:12px;background:#dcdcdd;position:relative;flex:none}
.sp::after{content:"";position:absolute;left:1px;border:3.500px solid transparent}
.sp.dn::after{top:4px;border-top:4px solid #222;border-bottom:0}
.sp.up::after{top:4px;border-bottom:4px solid #222;border-top:0}
.units{color:#3a3a3c;white-space:nowrap;width:52px;font-size:11.300px;flex:none}
.nudge{width:78px;height:23px;border:1px solid #7a7a7c;background:#fff;display:flex;align-items:center;justify-content:space-between;padding-left:2px;flex:none;color:#444}
.nudge-sp{display:flex;flex-direction:column;gap:1px;margin-right:1px}
.nudge-sp .sp{width:17px;height:9px}
.nudge-sp .sp::after{left:5px;top:2px}
.xy{font:bold 9px "Open Sans",sans-serif;fill:#222}
.pdf{font:bold 6px "Open Sans",sans-serif;fill:#fff;text-anchor:middle}

.main{display:flex;height:838px;flex:none}
.toolbox{width:30px;flex:none;background:#f3f3f4;display:flex;flex-direction:column;align-items:center;padding-top:3px;border-right:1px solid #e4e4e5}
.tool-box{width:22px;height:22px;border:1px solid #bdbdbf;background:#fff;display:flex;align-items:center;justify-content:center;position:relative;flex:none}
.tool{width:20px;height:20px;position:relative;flex:none}
.fly::after{content:"";position:absolute;right:-2px;bottom:-1px;border:3px solid transparent;border-right-color:#111;border-bottom-color:#111}
.tool-box.fly::after{right:0;bottom:0}
.hsep{width:26px;height:1px;background:#dcdcdd;flex:none}
.tool-a{font:bold 16px "Open Sans",sans-serif;fill:#eceef2;stroke:#666;stroke-width:.8;text-anchor:middle}

.work{width:1232px;flex:none;display:flex;flex-direction:column;position:relative}
.tabs{height:19px;background:#e8e8e9;display:flex;align-items:center;flex:none;font-size:11.100px}
.tab{height:19px;display:flex;align-items:center;color:#3a3a3c;white-space:nowrap}
.tab-a{width:127px;padding-left:3px}
.tab-b{width:108px;background:#cde3fb;padding-left:4px}
.tab-plus{width:20px;text-align:center;color:#c9c9cb;font:bold 20px/19px "Liberation Sans",sans-serif}

.hruler{height:20px;flex:none;border-top:1px solid #33a9d2;border-bottom:2px solid #8a8a8c;background:#f3f3f4 repeating-linear-gradient(90deg,#8a8a8c 0 1px,transparent 1px 18.800px) 55px 14px/100% 2px no-repeat;display:flex;padding-left:8px;position:relative}
.corner{position:absolute;left:5px;top:4px;width:12px;height:12px}
.rx{width:94px;flex:none;text-align:center;font-size:10px;line-height:12px;color:#a0a0a2;position:relative;padding-top:2px}
.rx::after{content:"";position:absolute;left:50%;bottom:0;width:1px;height:4px;background:#8a8a8c}
.unit-h{position:absolute;right:4px;top:2px;font-size:9.500px;line-height:12px;color:#a0a0a2}
.mark-h{position:absolute;left:1053px;top:0;bottom:0;border-left:1px dashed #111}

.body{display:flex;height:780px;flex:none}
.vruler{width:19px;flex:none;background:#f3f3f4 repeating-linear-gradient(180deg,#8a8a8c 0 1px,transparent 1px 18.800px) 16px 0/2px 100% no-repeat;display:flex;flex-direction:column;padding-top:6px;position:relative;overflow:hidden}
.ry{height:94px;flex:none;writing-mode:vertical-rl;transform:rotate(180deg);text-align:center;font-size:10px;line-height:16px;color:#a0a0a2;position:relative}
.unit-v{position:absolute;left:0;bottom:7px;writing-mode:vertical-rl;transform:rotate(180deg);font-size:9.500px;line-height:16px;color:#a0a0a2}
.mark-v{position:absolute;left:0;top:133px;width:19px;border-top:1px dashed #111}
.view{flex:1;display:flex;flex-direction:column;min-width:0}
.canvas{height:761px;background:#fff;border-left:1px solid #8a8a8c;position:relative;flex:none}
.stamp{display:block;width:1211px;height:761px}
.ring{fill:none;stroke:#4f2a63}
.ring-a{stroke-width:25}
.ring-b{stroke-width:12}
.st-top{font:bold 22.500px "Open Sans",sans-serif;fill:#fff}
.st-arc{font:49px "DejaVu Sans",sans-serif;font-stretch:condensed;fill:#4f2a63;stroke:#4f2a63;stroke-width:.9}
.st-star{font:bold 50px "DejaVu Sans",sans-serif;font-stretch:condensed;fill:#4f2a63;text-anchor:middle}
.st-name{font:76px "DejaVu Sans",sans-serif;font-stretch:condensed;fill:#4f2a63;stroke:#4f2a63;stroke-width:1.800;text-anchor:middle}
.vscroll{position:absolute;right:1px;top:0;bottom:0;width:17px;display:flex;flex-direction:column;align-items:center;justify-content:space-between;padding:1px 0 0}
.arrow-box{width:17px;height:15px;background:#f4f4f5;display:flex;align-items:center;justify-content:center;flex:none}
.arrow{width:10px;height:6px;display:block}
.vthumb{position:absolute;left:1px;top:328px;width:14px;height:47px;background:#c8c8ca}
.arrow-s{width:6px;height:10px;display:block}

.pagerow{height:19px;flex:none;background:#f3f3f4;border-top:2px solid #a8a8aa;display:flex;align-items:center;padding:0 0 3px 2px}
.pg{width:12px;height:14px;flex:none}
.pg-num{width:58px;flex:none;text-align:center;font-size:11.300px;color:#333;margin:1px 5px 0 4px}
.pg-tab{width:94px;height:17px;margin:3px 0 0 3px;background:#fff;border-right:1px solid #bbb;padding-left:15px;flex:none;font-size:11.500px;line-height:14px;color:#333}
.pg-fill{width:348px;height:17px;margin-top:3px;flex:none;position:relative;border-right:1px solid #bbb}
.dots{position:absolute;right:4px;top:3px;width:2px;height:11px;background:repeating-linear-gradient(#aaa 0 2px,transparent 2px 4px)}
.hscroll{width:582px;flex:none;display:flex;align-items:center;justify-content:space-between;padding:0 0 0 5px;position:relative;height:14px}
.hthumb{position:absolute;left:247px;top:0;width:81px;height:14px;background:#c8c8ca}
.zoomer{width:14px;height:14px;flex:none;margin-left:9px}

.docpal{height:19px;flex:none;background:#f3f3f4;border-bottom:1px solid #d8d8d9;display:flex;align-items:center;position:relative}
.dots-s{left:5px;right:auto;top:4px}
.play{width:0;height:0;border:4px solid transparent;border-left:6px solid #111;border-right:0;flex:none}
.docpal>.play{margin-left:11px}
.pick{width:13px;height:13px;flex:none;margin-left:9px}
.lt{width:6px;height:10px;margin-left:4px;flex:none}
.swatches-h{display:flex;margin-left:6px}
.sw{width:17px;height:17px;flex:none}
.sw-x{background:#fff linear-gradient(to top right,transparent 48%,#222 48%,#222 52%,transparent 52%);border:1px solid #333;position:relative;overflow:hidden}
.sw-x::after{content:"";position:absolute;inset:0;background:linear-gradient(to top left,transparent 48%,#222 48%,#222 52%,transparent 52%)}
.c-a1{background:#8172c8}.c-a2{background:#9a90c4}.c-a3{background:#585472}.c-a4{background:#8f3fbc}.c-a5{background:#7f5a92}.c-a6{background:#7a4398}.c-a7{background:#a84392}.c-a8{background:#4f2a68}.c-k{background:#161418}.c-w{background:#fff;border:1px solid #777}
.docpal-end{margin-left:auto;margin-right:13px;display:flex;gap:12px;color:#cfcfd1;font-size:14px}

.palette{width:18px;flex:none;background:#f3f3f4;border-left:1px solid #e0e0e1;display:flex;flex-direction:column;align-items:center;position:relative}
.dots-top{width:12px;height:2px;margin-top:4px;background:repeating-linear-gradient(90deg,#aaa 0 2px,transparent 2px 4px);flex:none}
.play-r{margin-top:4px;border-width:5px;border-left-width:7px}
.pick-r{margin:7px 0 0}
.pal-arrow{width:12px;height:7px;flex:none;margin-top:5px}
.swatches-v{height:741px;width:17px;overflow:hidden;margin-top:2px;flex:none}
.sv{width:17px;height:17px;border-bottom:1px solid #6a6a6c}
.g1{background:#141416}.g2{background:#2f2f31}.g3{background:#4c4c4e}.g4{background:#666668}.g5{background:#808082}.g6{background:#98989a}.g7{background:#aeaeb0}.g8{background:#bebec0}.g9{background:#d3d3d5}.g10{background:#e6e6e8;border-bottom:0}
.c-w2{background:#fff;border-bottom:0}
.p1{background:#3b2a96}.p2{background:#0aa3dc}.p3{background:#0aa35e}.p4{background:#fde311}.p5{background:#e42320}.p6{background:#e5067c}.p7{background:#ad4a93}.p8{background:#f58100}.p9{background:#ffb8c3}.p10{background:#78706a}.p11{background:#d9d3ec}.p12{background:#ab9cd6}.p13{background:#7a90c9}.p14{background:#8470b6}.p15{background:#9282b3}.p16{background:#4d6a91}.p17{background:#5b4f74}.p18{background:#6f8199}.p19{background:#0a8ed0}.p20{background:#a8d6ec}.p21{background:#b3c6d0}.p22{background:#8f9da3}.p23{background:#6b7478}.p24{background:#434a4e}.p25{background:#4b6e68}.p26{background:#4a8a7c}.p27{background:#739c90}.p28{background:#5aa892}.p29{background:#5fa673}.p30{background:#6dd0d6}.p31{background:#50a4b4}.p32{background:#b5c8b5}
.pal-down{margin-top:4px}
.pal-more{color:#ccc;font-size:14px;line-height:14px;margin-top:6px}

.status{height:33px;background:#f3f3f4;flex:none;display:flex;align-items:center;padding:0 0 2px 6px;font-size:11.300px;color:#333;border-top:1px solid #e6e6e7}
.coords{width:98px;white-space:nowrap;flex:none;letter-spacing:-.2px}
.playbox{width:14px;height:14px;margin-left:9px;border:1px solid #333;display:flex;align-items:center;justify-content:center;background:#fff;flex:none}
.st-ic{height:16px;width:16px;flex:none}
.st-mon{margin-left:698px}
.st-fill{width:18px;margin-left:12px}
.st-x{margin-left:6px}
.st-none{margin-left:3px;width:20px;flex:none}
.st-sep{margin-left:141px;height:26px}
.st-pen{width:12px;margin-left:7px}
.st-k{width:17px;height:17px;background:#161418;margin-left:8px;border:1px solid #888;flex:none}
.st-cmyk{margin-left:4px;white-space:nowrap;letter-spacing:-.5px;font-size:11px;width:94px;flex:none}
.st-wd{margin-left:5px;white-space:nowrap;font-size:11px;letter-spacing:-.3px}

.taskbar{height:40px;background:#0a0a0b;display:flex;align-items:center;flex:none;position:relative}
.tk{width:24px;height:24px;flex:none;display:block;position:relative}
.tk-wrap{width:24px;height:24px;position:relative;flex:none}
.tk-on::after{content:"";position:absolute;left:-8px;right:-8px;bottom:-8px;height:2px;background:#76b9ed}
.tk-active::before{content:"";position:absolute;left:-12px;right:-12px;top:-8px;bottom:-8px;background:#3c3c3e}
.tk-active::after{left:-12px;right:-12px}
.tk-mu{font:bold 16px "Open Sans",sans-serif;fill:#fff;text-anchor:middle}
.tk-w{font:bold 13px "Open Sans",sans-serif;fill:#fff;text-anchor:middle}
.tray{margin-left:auto;display:flex;align-items:center;color:#e8e8e8}
.tr{flex:none;display:block}
.tr-a{width:14px;height:14px}
.tr-b{width:14px;height:14px;margin-left:9px}
.tr-c{width:16px;height:14px;margin-left:10px}
.tr-d{width:16px;height:16px;margin-left:8px}
.lang{margin-left:11px;font-size:11.500px;width:24px;flex:none}
.clock{margin-left:15px;display:flex;flex-direction:column;align-items:center;width:56px;margin-right:14px;font-size:11.300px;line-height:16px;flex:none}
```
